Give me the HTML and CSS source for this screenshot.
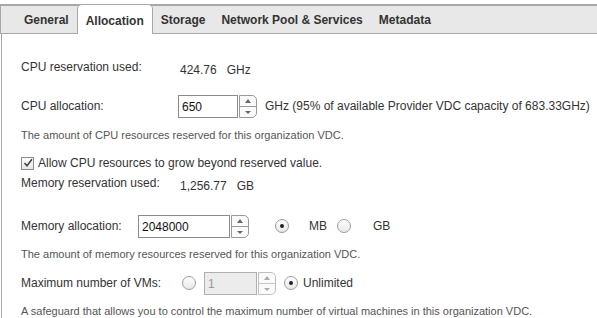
FILE: index.html
```html
<!DOCTYPE html>
<html lang="en">
<head>
    <meta charset="UTF-8">
    <title>Organization VDC - Allocation</title>
    <link rel="stylesheet" href="styles.css">
</head>
<body>

    <!-- Tabs -->
    <div class="tabs">
        <div class="tab">General</div>
        <div class="tab active">Allocation</div>
        <div class="tab">Storage</div>
        <div class="tab">Network Pool &amp; Services</div>
        <div class="tab">Metadata</div>
    </div>

    <div class="panel">

        <div class="row row-used">
            <span class="label">CPU reservation used:</span>
            <span class="value">424.76&nbsp;&nbsp;&nbsp;GHz</span>
        </div>

        <div class="row row-cpu">
            <span class="label label-cpu">CPU allocation:</span>
            <div class="spin cpu-spin">
                <div class="field">650</div>
                <div class="arrows"><span class="up"></span><span class="down"></span></div>
            </div>
            <span class="unit">GHz (95% of available Provider VDC capacity of 683.33GHz)</span>
        </div>

        <div class="help help-cpu">The amount of CPU resources reserved for this organization VDC.</div>

        <div class="row row-check">
            <span class="checkbox">
                <svg width="10" height="10" viewBox="0 0 10 10"><path d="M1.5 5 L4 7.8 L9 1.2" fill="none" stroke="#444" stroke-width="1.6"/></svg>
            </span>
            <span>Allow CPU resources to grow beyond reserved value.</span>
        </div>

        <div class="row row-memused">
            <span class="label">Memory reservation used:</span>
            <span class="value">1,256.77&nbsp;&nbsp;&nbsp;GB</span>
        </div>

        <div class="row row-mem">
            <span class="label label-mem">Memory allocation:</span>
            <div class="spin mem-spin">
                <div class="field">2048000</div>
                <div class="arrows"><span class="up"></span><span class="down"></span></div>
            </div>
            <span class="radio checked mb-radio"></span>
            <span class="opt mb-opt">MB</span>
            <span class="radio gb-radio"></span>
            <span class="opt gb-opt">GB</span>
        </div>

        <div class="help help-mem">The amount of memory resources reserved for this organization VDC.</div>

        <div class="row row-vms">
            <span class="label label-vms">Maximum number of VMs:</span>
            <span class="radio vm-radio"></span>
            <div class="spin vm-spin disabled">
                <div class="field">1</div>
                <div class="arrows"><span class="up"></span><span class="down"></span></div>
            </div>
            <span class="radio checked unl-radio"></span>
            <span>Unlimited</span>
        </div>

        <div class="help help-vms">A safeguard that allows you to control the maximum number of virtual machines in this organization VDC.</div>

    </div>

</body>
</html>
```

FILE: styles.css
```css
body {
    font-family: "Liberation Sans", Arial, sans-serif;
    font-size: 12px;
    color: #333;
    margin: 0;
    padding: 0;
    background: #fff;
}

/* Tabs */
.tabs {
    display: flex;
    align-items: flex-end;
    margin-top: 4px;
    height: 27px;
    padding-left: 15px;
    background: #e8e8e8;
    border-top: 2px solid #a8a8a8;
    border-bottom: 1px solid #a8a8a8;
    border-left: 1px solid #a8a8a8;
}

.tab {
    font-weight: bold;
    padding: 0 7px;
    height: 26px;
    line-height: 27px;
    border: 1px solid transparent;
    border-bottom: none;
}

.tab.active {
    background: #fff;
    border-color: #a8a8a8;
    border-radius: 5px 5px 0 0;
    height: 29px;
    line-height: 32px;
    margin-bottom: -1px;
    padding: 0 8px;
}

/* Panel */
.panel {
    border-left: 1px solid #a8a8a8;
    margin-left: 1px;
    padding: 0 0 12px 19px;
}

.row {
    display: flex;
    align-items: center;
}

.label {
    width: 159px;
}

.value {
    position: relative;
    top: 3px;
}

.row-used {
    height: 16px;
    padding-top: 25px;
}

.row-cpu {
    margin-top: 19px;
    height: 24px;
}

.label-cpu {
    width: 157px;
}

.help {
    font-size: 11px;
    color: #555;
}

.help-cpu {
    margin-top: 11px;
}

.row-check {
    margin-top: 14px;
    height: 16px;
}

.checkbox {
    width: 11px;
    height: 11px;
    border: 1px solid #8c8c8c;
    background: linear-gradient(#fdfdfd, #e6e6e6);
    margin-right: 4px;
    display: flex;
    align-items: center;
    justify-content: center;
}

.row-memused {
    margin-top: 4px;
    height: 16px;
}

.row-mem {
    margin-top: 23px;
    height: 24px;
}

.label-mem {
    width: 117px;
}

.help-mem {
    margin-top: 10px;
}

.row-vms {
    margin-top: 11px;
    height: 24px;
}

.label-vms {
    width: 161px;
}

.help-vms {
    margin-top: 10px;
}

/* Spinner input */
.spin {
    display: flex;
    height: 23px;
}

.spin .field {
    border: 1px solid #8a8a8a;
    background: #fff;
    color: #111;
    padding: 0 3px;
    height: 21px;
    line-height: 22px;
    font-size: 12px;
}

.cpu-spin .field {
    width: 52px;
}

.mem-spin .field {
    width: 84px;
}

.vm-spin .field {
    width: 45px;
}

.arrows {
    display: flex;
    flex-direction: column;
    width: 16px;
    margin-left: 1px;
    height: 21px;
    border: 1px solid #9a9a9a;
    border-radius: 0 5px 5px 0;
    background: #fafafa;
    overflow: hidden;
}

.arrows span {
    flex: 1;
    position: relative;
}

.arrows .up {
    border-bottom: 1px solid #9a9a9a;
}

.arrows .up::after,
.arrows .down::after {
    content: "";
    position: absolute;
    left: 5px;
    top: 3px;
    border-left: 3px solid transparent;
    border-right: 3px solid transparent;
}

.arrows .up::after {
    border-bottom: 4px solid #666;
}

.arrows .down::after {
    top: 4px;
    border-top: 3px solid #666;
}

.disabled .field {
    background: #ececec;
    border-color: #b0b0b0;
    color: #999;
}

.disabled .arrows {
    border-color: #c0c0c0;
}

.disabled .arrows .up {
    border-color: #c8c8c8;
}

.disabled .arrows .up::after {
    border-bottom-color: #aaa;
}

.disabled .arrows .down::after {
    border-top-color: #aaa;
}

.unit {
    margin-left: 8px;
}

/* Radios */
.radio {
    width: 12px;
    height: 12px;
    border: 1px solid #9c9c9c;
    border-radius: 50%;
    background: linear-gradient(#fefefe, #e8e8e8);
    position: relative;
    flex-shrink: 0;
}

.radio.checked::after {
    content: "";
    position: absolute;
    left: 4px;
    top: 4px;
    width: 4px;
    height: 4px;
    border-radius: 50%;
    background: #222;
}

.mb-radio {
    margin-left: 26px;
}

.mb-opt {
    margin-left: 20px;
}

.gb-radio {
    margin-left: 10px;
}

.gb-opt {
    margin-left: 22px;
}

.vm-radio {
    margin-right: 8px;
}

.unl-radio {
    margin-left: 8px;
    margin-right: 5px;
}
```
